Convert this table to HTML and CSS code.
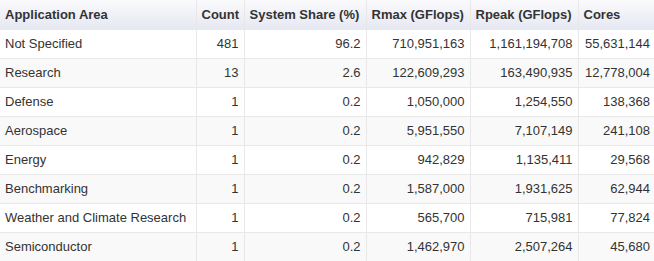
FILE: index.html
```html
<!DOCTYPE html>
<html lang="en">
<head>
    <meta charset="UTF-8">
    <title>Application Area</title>
    <link rel="stylesheet" href="styles.css">
</head>
<body>
    <table class="stats">
        <colgroup>
            <col class="c-area">
            <col class="c-count">
            <col class="c-share">
            <col class="c-rmax">
            <col class="c-rpeak">
            <col class="c-cores">
        </colgroup>
        <thead>
            <tr>
                <th>Application Area</th>
                <th class="num">Count</th>
                <th>System Share (%)</th>
                <th>Rmax (GFlops)</th>
                <th>Rpeak (GFlops)</th>
                <th>Cores</th>
            </tr>
        </thead>
        <tbody>
            <tr><td>Not Specified</td><td class="num">481</td><td class="num">96.2</td><td class="num">710,951,163</td><td class="num">1,161,194,708</td><td class="num">55,631,144</td></tr>
            <tr><td>Research</td><td class="num">13</td><td class="num">2.6</td><td class="num">122,609,293</td><td class="num">163,490,935</td><td class="num">12,778,004</td></tr>
            <tr><td>Defense</td><td class="num">1</td><td class="num">0.2</td><td class="num">1,050,000</td><td class="num">1,254,550</td><td class="num">138,368</td></tr>
            <tr><td>Aerospace</td><td class="num">1</td><td class="num">0.2</td><td class="num">5,951,550</td><td class="num">7,107,149</td><td class="num">241,108</td></tr>
            <tr><td>Energy</td><td class="num">1</td><td class="num">0.2</td><td class="num">942,829</td><td class="num">1,135,411</td><td class="num">29,568</td></tr>
            <tr><td>Benchmarking</td><td class="num">1</td><td class="num">0.2</td><td class="num">1,587,000</td><td class="num">1,931,625</td><td class="num">62,944</td></tr>
            <tr><td>Weather and Climate Research</td><td class="num">1</td><td class="num">0.2</td><td class="num">565,700</td><td class="num">715,981</td><td class="num">77,824</td></tr>
            <tr><td>Semiconductor</td><td class="num">1</td><td class="num">0.2</td><td class="num">1,462,970</td><td class="num">2,507,264</td><td class="num">45,680</td></tr>
        </tbody>
    </table>
</body>
</html>
```

FILE: styles.css
```css
* {
    margin: 0;
    padding: 0;
    box-sizing: border-box;
}

body {
    font-family: 'Liberation Sans', Arial, sans-serif;
    font-size: 13px;
    color: #333;
    background: #fff;
}

.stats {
    width: 655px;
    border-collapse: collapse;
    table-layout: fixed;
}

.c-area { width: 196px; }
.c-count { width: 48px; }
.c-share { width: 122px; }
.c-rmax { width: 104px; }
.c-rpeak { width: 108px; }
.c-cores { width: 77px; }

th,
td {
    height: 29px;
    padding: 0 5px;
    border: 1px solid #e8e8e8;
    white-space: nowrap;
    vertical-align: middle;
}

th {
    text-align: left;
    font-weight: bold;
    color: #333;
    background: linear-gradient(to bottom, #fafafc 0%, #e6e8f2 100%);
    border-top: none;
}

th:first-child,
td:first-child {
    border-left: none;
}

th:last-child,
td:last-child {
    border-right: none;
}

td.num,
th.num {
    text-align: right;
}

tbody tr:nth-child(even) td {
    background: #f9f9f9;
}

tbody tr:last-child td {
    border-bottom: none;
}
```
